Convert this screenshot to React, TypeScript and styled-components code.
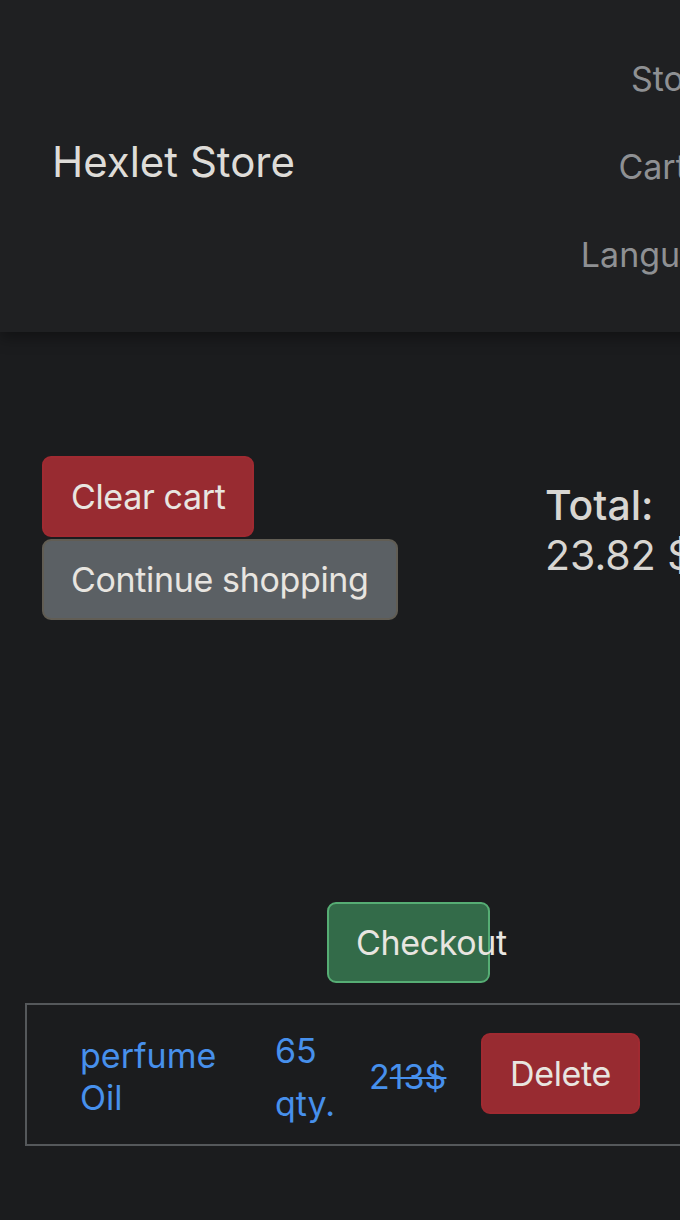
import React from "react";
import styled, { createGlobalStyle } from "styled-components";

const Global = createGlobalStyle`
  html, body { margin: 0; padding: 0; background: #1b1c1e; }
  body { font-family: Inter, "Noto Sans", sans-serif; color: #dcdad6; overflow-x: hidden; }
  #root { width: 680px; overflow: hidden; }
`;

const Page = styled.div`
  width: 680px;
  min-height: 1220px;
  background: #1b1c1e;
  overflow: hidden;
`;

const Header = styled.header`
  height: 332px;
  width: 780px;
  box-sizing: border-box;
  background: #1f2022;
  box-shadow: 0 6px 14px rgba(0, 0, 0, 0.35);
  display: flex;
  align-items: center;
  justify-content: space-between;
  padding-left: 52px;
  position: relative;
`;

const Brand = styled.div`
  font-size: 42px;
  color: #dedcd8;
  margin-top: -10px;
`;

const Nav = styled.nav`
  display: flex;
  flex-direction: column;
  align-items: flex-end;
  gap: 37px;
  margin-right: 45px;
`;

const NavItem = styled.span<{ $shift: number }>`
  font-size: 34px;
  line-height: 51px;
  color: #8e9093;
  white-space: nowrap;
  margin-right: ${(p) => p.$shift}px;
`;

const Main = styled.main`
  padding-top: 124px;
`;

const TopRow = styled.div`
  display: flex;
  align-items: flex-start;
  padding-left: 42px;
`;

const ButtonCol = styled.div`
  display: flex;
  flex-direction: column;
  align-items: flex-start;
  gap: 2px;
  width: 503px;
  flex: none;
`;

const Button = styled.button<{ $variant: "danger" | "secondary" | "success" }>`
  font-family: inherit;
  font-size: 34px;
  line-height: 51px;
  letter-spacing: -0.35px;
  padding: 13px 27px;
  border-radius: 9px;
  border: 2px solid
    ${(p) =>
      p.$variant === "danger" ? "#a02a31" : p.$variant === "secondary" ? "#615d54" : "#56ad74"};
  background: ${(p) =>
    p.$variant === "danger" ? "#982b31" : p.$variant === "secondary" ? "#5b6064" : "#336b49"};
  color: #e8e5e0;
  white-space: nowrap;
  text-align: left;
  cursor: pointer;
`;

const CheckoutButton = styled(Button)`
  width: 163px;
  overflow: visible;
  margin-left: 327px;
  margin-top: 282px;
  display: block;
`;

const Total = styled.div`
  margin-top: 24px;
  font-size: 41px;
  line-height: 50px;
  color: #d8d6d2;
  white-space: nowrap;
`;

const TotalLabel = styled.div`
  font-weight: 500;
`;

const Table = styled.div`
  margin-top: 20px;
  margin-left: 25px;
  width: 720px;
  height: 143px;
  box-sizing: border-box;
  border: 2px solid #55585b;
  display: flex;
  align-items: center;
  padding-left: 53px;
  padding-top: 4px;
`;

const Cell = styled.div<{ $w: number; $lh?: number }>`
  width: ${(p) => p.$w}px;
  flex: none;
  font-size: 34px;
  line-height: ${(p) => p.$lh ?? 42}px;
  color: #4790ec;
`;

const Strike = styled.span`
  text-decoration: line-through;
  text-decoration-thickness: 2px;
`;

const DeleteButton = styled(Button)`
  margin-top: -6px;
`;

export default function App() {
  return (
    <Page>
      <Global />
      <Header>
        <Brand>Hexlet Store</Brand>
        <Nav>
          <NavItem $shift={19}>Store</NavItem>
          <NavItem $shift={0}>Cart (1)</NavItem>
          <NavItem $shift={-5}>Language</NavItem>
        </Nav>
      </Header>
      <Main>
        <TopRow>
          <ButtonCol>
            <Button $variant="danger">Clear cart</Button>
            <Button $variant="secondary">Continue shopping</Button>
          </ButtonCol>
          <Total>
            <TotalLabel>Total:</TotalLabel>
            <div>23.82 $</div>
          </Total>
        </TopRow>
        <CheckoutButton $variant="success">Checkout</CheckoutButton>
        <Table>
          <Cell $w={195}>
            perfume
            <br />
            Oil
          </Cell>
          <Cell $w={94} $lh={53}>
            65
            <br />
            qty.
          </Cell>
          <Cell $w={112}>
            2<Strike>13$</Strike>
          </Cell>
          <DeleteButton $variant="danger">Delete</DeleteButton>
        </Table>
      </Main>
    </Page>
  );
}
